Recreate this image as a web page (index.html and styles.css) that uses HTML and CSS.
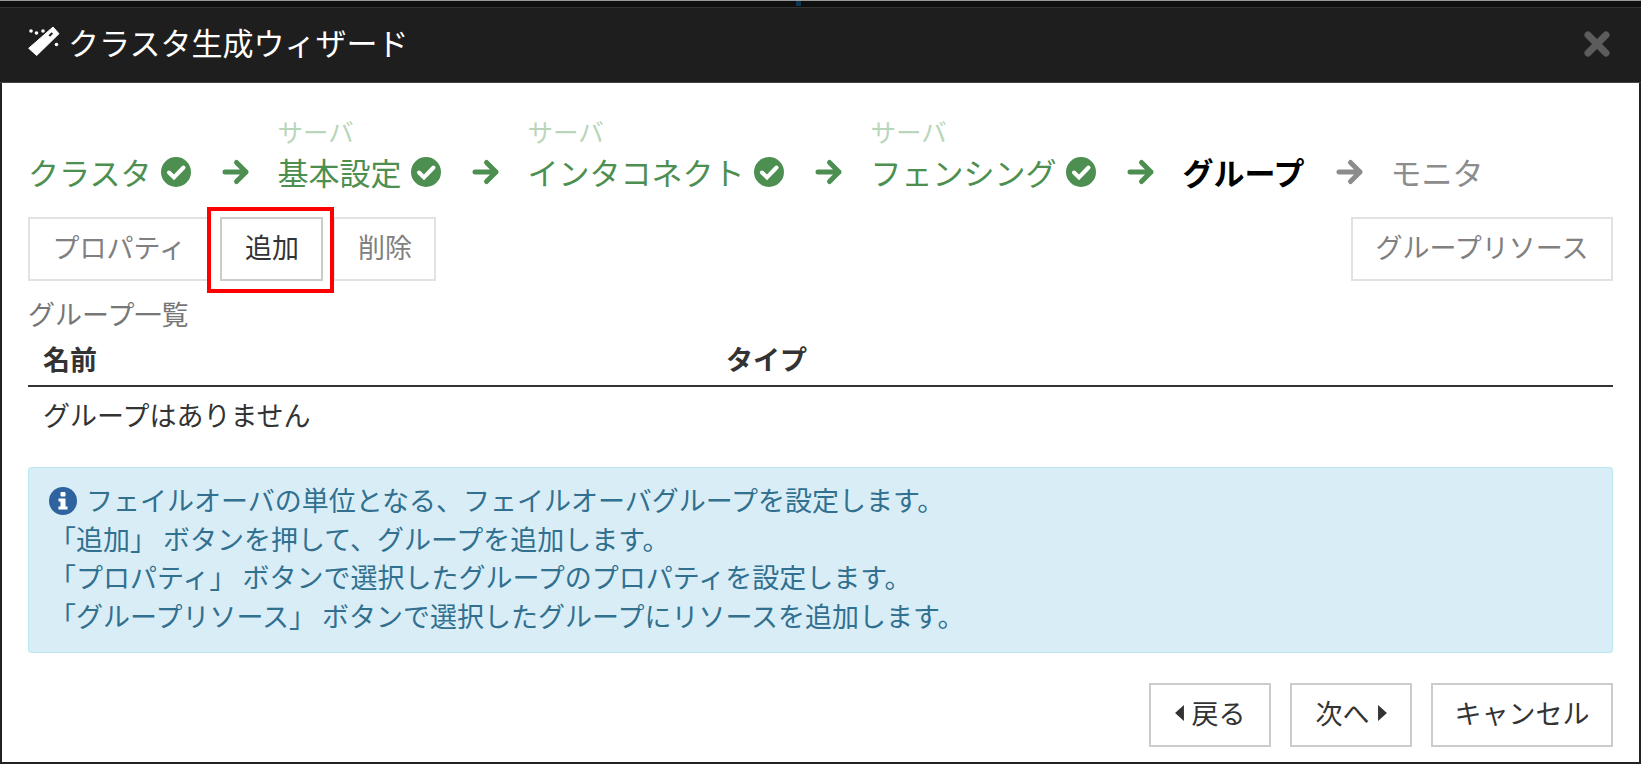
FILE: index.html
```html
<!DOCTYPE html>
<html lang="ja">
<head>
    <meta charset="utf-8">
    <title>クラスタ生成ウィザード</title>
    <link rel="stylesheet" href="styles.css">
</head>
<body>
    <div class="dialog">
        <div class="topstrip"><span class="topdot"></span></div>
        <div class="dialog-header">
            <h1 class="dialog-title">
                <svg class="wand" viewBox="0 0 32 32">
                    <path d="M25 1 31 7.700 8.700 29.500 0.700 22.300Z" fill="#fff" stroke="#fff" stroke-linejoin="round"/>
                    <path d="M21.300 10 24.300 7" stroke="#1e1e1e" stroke-width="2"/>
                    <circle cx="3" cy="5" r="1.800" fill="#fff"/>
                    <circle cx="8.500" cy="7" r="1.800" fill="#fff"/>
                    <circle cx="15" cy="5" r="1.800" fill="#fff"/>
                    <circle cx="28.500" cy="18.500" r="1.800" fill="#fff"/>
                </svg>
                クラスタ生成ウィザード
            </h1>
            <svg class="close" viewBox="0 0 28 28">
                <path d="M5 5 23 23M23 5 5 23" stroke="#5c5c5c" stroke-width="7" stroke-linecap="round"/>
            </svg>
        </div>
        <div class="dialog-body">
            <div class="steps">
                <div class="step done">
                    <div class="step-sub">&nbsp;</div>
                    <div class="step-name">クラスタ<svg class="check" viewBox="0 0 30 30"><circle cx="15" cy="15" r="15" fill="#4d8f50"/><path d="M8 15.500 13 20.500 22.500 10.500" fill="none" stroke="#fff" stroke-width="4" stroke-linecap="round"/></svg></div>
                </div>
                <svg class="arrow" viewBox="0 0 28 28"><path d="M3 14H24M14.500 4.500 24 14 14.500 23.500" fill="none" stroke="#4d8f50" stroke-width="5" stroke-linejoin="round" stroke-linecap="round"/></svg>
                <div class="step done">
                    <div class="step-sub">サーバ</div>
                    <div class="step-name">基本設定<svg class="check" viewBox="0 0 30 30"><circle cx="15" cy="15" r="15" fill="#4d8f50"/><path d="M8 15.500 13 20.500 22.500 10.500" fill="none" stroke="#fff" stroke-width="4" stroke-linecap="round"/></svg></div>
                </div>
                <svg class="arrow" viewBox="0 0 28 28"><path d="M3 14H24M14.500 4.500 24 14 14.500 23.500" fill="none" stroke="#4d8f50" stroke-width="5" stroke-linejoin="round" stroke-linecap="round"/></svg>
                <div class="step done">
                    <div class="step-sub">サーバ</div>
                    <div class="step-name">インタコネクト<svg class="check" viewBox="0 0 30 30"><circle cx="15" cy="15" r="15" fill="#4d8f50"/><path d="M8 15.500 13 20.500 22.500 10.500" fill="none" stroke="#fff" stroke-width="4" stroke-linecap="round"/></svg></div>
                </div>
                <svg class="arrow" viewBox="0 0 28 28"><path d="M3 14H24M14.500 4.500 24 14 14.500 23.500" fill="none" stroke="#4d8f50" stroke-width="5" stroke-linejoin="round" stroke-linecap="round"/></svg>
                <div class="step done">
                    <div class="step-sub">サーバ</div>
                    <div class="step-name">フェンシング<svg class="check" viewBox="0 0 30 30"><circle cx="15" cy="15" r="15" fill="#4d8f50"/><path d="M8 15.500 13 20.500 22.500 10.500" fill="none" stroke="#fff" stroke-width="4" stroke-linecap="round"/></svg></div>
                </div>
                <svg class="arrow" viewBox="0 0 28 28"><path d="M3 14H24M14.500 4.500 24 14 14.500 23.500" fill="none" stroke="#4d8f50" stroke-width="5" stroke-linejoin="round" stroke-linecap="round"/></svg>
                <div class="step current">
                    <div class="step-sub">&nbsp;</div>
                    <div class="step-name">グループ</div>
                </div>
                <svg class="arrow" viewBox="0 0 28 28"><path d="M3 14H24M14.500 4.500 24 14 14.500 23.500" fill="none" stroke="#8c8c8c" stroke-width="5" stroke-linejoin="round" stroke-linecap="round"/></svg>
                <div class="step todo">
                    <div class="step-sub">&nbsp;</div>
                    <div class="step-name">モニタ</div>
                </div>
            </div>

            <div class="toolbar">
                <button class="btn disabled">プロパティ</button>
                <div class="highlight">
                    <button class="btn">追加</button>
                </div>
                <button class="btn disabled">削除</button>
                <button class="btn disabled push-right">グループリソース</button>
            </div>

            <div class="caption">グループ一覧</div>
            <table class="list">
                <thead>
                    <tr><th class="col-name">名前</th><th>タイプ</th></tr>
                </thead>
                <tbody>
                    <tr><td colspan="2">グループはありません</td></tr>
                </tbody>
            </table>

            <div class="alert">
                <div><svg class="info" viewBox="0 0 28 28"><circle cx="14" cy="14" r="14" fill="#2f63a0"/><rect x="11.500" y="5" width="5" height="4.500" rx="1" fill="#fff"/><path d="M9.500 11.500H16.500V19.500H18.500V22.500H9.500V19.500H11.500V14.500H9.500Z" fill="#fff"/></svg>フェイルオーバの単位となる、フェイルオーバグループを設定します。</div>
                <div>「追加」 ボタンを押して、グループを追加します。</div>
                <div>「プロパティ」 ボタンで選択したグループのプロパティを設定します。</div>
                <div>「グループリソース」 ボタンで選択したグループにリソースを追加します。</div>
            </div>

            <div class="footer">
                <button class="btn btn-nav"><svg class="caret caret-back" viewBox="0 0 10 18"><path d="M10 0V18L0 9Z"/></svg>戻る</button>
                <button class="btn btn-nav">次へ<svg class="caret caret-next" viewBox="0 0 10 18"><path d="M0 0V18L10 9Z"/></svg></button>
                <button class="btn btn-cancel">キャンセル</button>
            </div>
        </div>
    </div>
</body>
</html>
```

FILE: styles.css
```css
* {
    margin: 0;
    padding: 0;
    box-sizing: border-box;
    font-family: "Noto Sans CJK JP", "Noto Sans", sans-serif;
}

html, body {
    height: 100%;
    background: #fff;
}

.dialog {
    height: 764px;
    border-left: 2px solid #222;
    border-right: 2px solid #222;
    border-bottom: 2px solid #222;
    display: flex;
    flex-direction: column;
}

.topstrip {
    height: 8px;
    margin: 0 -2px;
    background: #0f0f0f;
    border-top: 1px solid #999;
    border-bottom: 1px solid #333;
    display: flex;
    justify-content: center;
}

.topdot {
    width: 5px;
    height: 5px;
    margin-left: -44px;
    background: #0d3550;
}

.dialog-header {
    height: 75px;
    background: #1e1e1e;
    border-bottom: 1px solid #444;
    margin: 0 -2px;
    padding: 0 30px 2px 28px;
    display: flex;
    align-items: center;
    justify-content: space-between;
}

.dialog-title {
    font-size: 31px;
    font-weight: 400;
    color: #fff;
    display: flex;
    align-items: center;
    padding-bottom: 5px;
}

.wand {
    width: 32px;
    height: 32px;
    margin-right: 8px;
}

.close {
    width: 28px;
    height: 28px;
}

.dialog-body {
    padding: 32px 26px 0;
    flex: 1;
}

.steps {
    display: flex;
    align-items: flex-end;
}

.step-sub {
    font-size: 25.5px;
    line-height: 32px;
    margin-bottom: 2px;
    color: #b9d6ba;
}

.step-name {
    font-size: 31px;
    line-height: 46px;
    display: flex;
    align-items: center;
}

.step.done .step-name {
    color: #4d8f50;
}

.step.current .step-name {
    color: #000;
    font-weight: 700;
}

.step.todo .step-name {
    color: #8c8c8c;
}

.check {
    width: 30px;
    height: 30px;
    margin-left: 10px;
}

.arrow {
    width: 28px;
    height: 28px;
    margin: 0 27px 9px 31px;
}

.toolbar {
    margin-top: 22px;
    display: flex;
    gap: 10px;
}

.btn {
    height: 64px;
    padding: 0 22.5px 5px;
    font-size: 27px;
    background: #fff;
    color: #333;
    border: 2px solid #ccc;
    display: inline-flex;
    align-items: center;
}

.btn.disabled {
    color: #808080;
    border-color: #e2e2e2;
}

.push-right {
    margin-left: auto;
}

/* red marker drawn over the screenshot */
.highlight {
    position: relative;
    display: flex;
}

.highlight::after {
    content: "";
    position: absolute;
    top: -10px;
    bottom: -12px;
    left: -13px;
    right: -11px;
    border: 4px solid #f00;
    pointer-events: none;
}

.caption {
    margin-top: 15px;
    font-size: 27px;
    line-height: 36px;
    color: #777;
}

.list {
    width: 100%;
    border-collapse: collapse;
    font-size: 27px;
    color: #333;
}

.list th {
    height: 54px;
    text-align: left;
    font-weight: 700;
    padding-left: 15px;
    border-bottom: 2px solid #333;
}

.list th.col-name {
    width: 683px;
}

.list td {
    height: 56px;
    padding-left: 15px;
}

.alert {
    margin-top: 25px;
    padding: 13px 20px 17px;
    font-size: 27px;
    line-height: 38.5px;
    color: #31708f;
    background: #d9edf7;
    border: 1px solid #bce8f1;
    border-radius: 3px;
}

.info {
    width: 28px;
    height: 28px;
    margin-right: 9px;
    vertical-align: -4px;
}

.footer {
    margin-top: 30px;
    display: flex;
    justify-content: flex-end;
    gap: 19px;
}

.btn-nav {
    padding: 0 23.5px 5px;
}

.btn-cancel {
    padding: 0 21.5px 5px;
}

.caret {
    width: 9px;
    height: 16px;
    fill: #333;
}

.caret-back {
    margin-right: 8px;
}

.caret-next {
    margin-left: 8px;
}
```
